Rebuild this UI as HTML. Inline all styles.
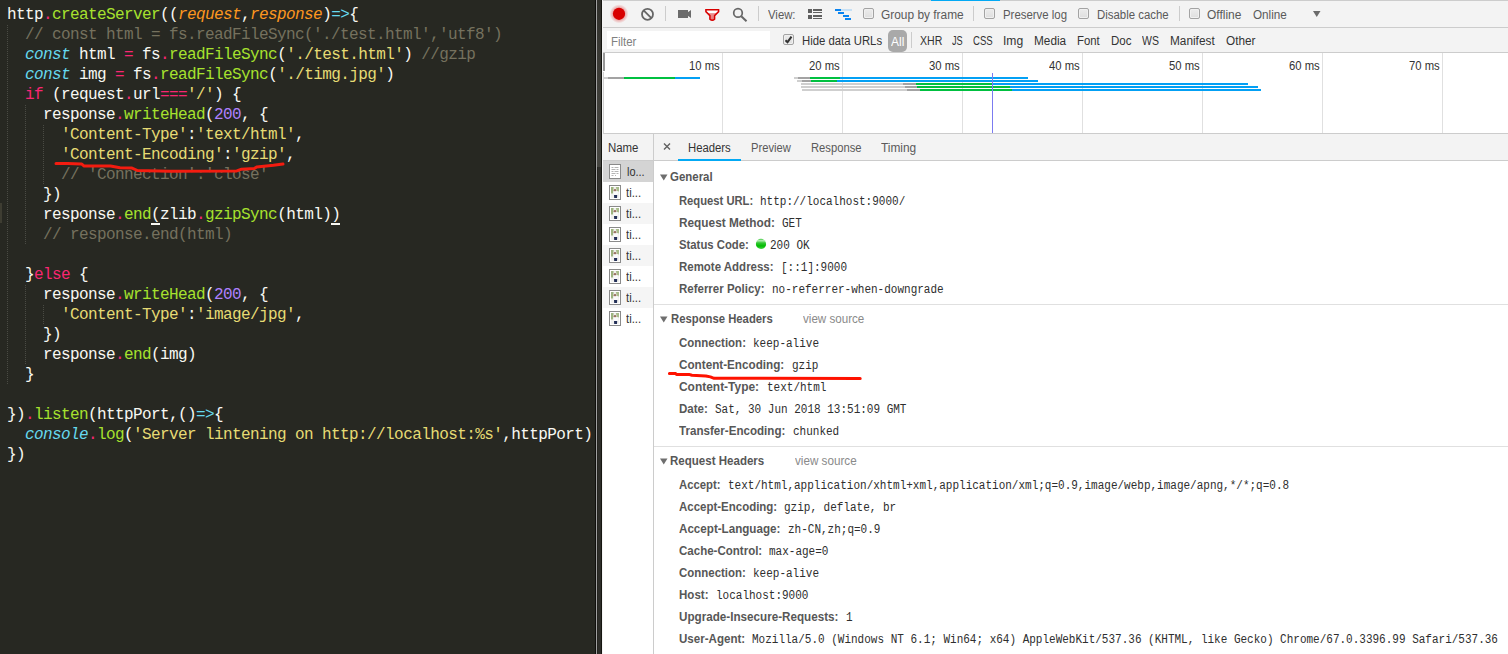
<!DOCTYPE html><html><head><meta charset="utf-8"><style>
html,body{margin:0;padding:0;}body{width:1508px;height:654px;position:relative;overflow:hidden;background:#272822;}
.t{position:absolute;white-space:pre;}
.code{position:absolute;left:7px;white-space:pre;font-family:"Liberation Mono",monospace;font-size:16px;line-height:20px;letter-spacing:-0.6px;color:#f8f8f2;}
.w{color:#f8f8f2}.p{color:#f92672}.g{color:#a6e22e}.oi{color:#fd971f;font-style:italic}.ci{color:#66d9ef;font-style:italic}.c{color:#66d9ef}.y{color:#e6db74}.pu{color:#ae81ff}.cm{color:#75715e}
</style></head><body>
<div style="position:absolute;left:7px;top:24px;width:1px;height:360px;background:repeating-linear-gradient(to bottom,transparent 0 1px,#4a4b44 1px 2px);"></div>
<div style="position:absolute;left:25px;top:104px;width:1px;height:140px;background:repeating-linear-gradient(to bottom,transparent 0 1px,#4a4b44 1px 2px);"></div>
<div style="position:absolute;left:25px;top:284px;width:1px;height:80px;background:repeating-linear-gradient(to bottom,transparent 0 1px,#4a4b44 1px 2px);"></div>
<div style="position:absolute;left:43px;top:124px;width:1px;height:60px;background:repeating-linear-gradient(to bottom,transparent 0 1px,#4a4b44 1px 2px);"></div>
<div style="position:absolute;left:43px;top:304px;width:1px;height:20px;background:repeating-linear-gradient(to bottom,transparent 0 1px,#4a4b44 1px 2px);"></div>
<div style="position:absolute;left:0px;top:203px;width:2px;height:20px;background:#3e3d32;"></div>
<div class="code" style="top:5px"><span class="w">http</span><span class="p">.</span><span class="g">createServer</span><span class="w">((</span><span class="oi">request</span><span class="w">,</span><span class="oi">response</span><span class="w">)</span><span class="c">=&gt;</span><span class="w">{</span></div>
<div class="code" style="top:25px"><span class="w">  </span><span class="cm">// const html = fs.readFileSync('./test.html','utf8')</span></div>
<div class="code" style="top:45px"><span class="w">  </span><span class="ci">const</span><span class="w"> html </span><span class="p">=</span><span class="w"> fs</span><span class="p">.</span><span class="g">readFileSync</span><span class="w">(</span><span class="y">'./test.html'</span><span class="w">) </span><span class="cm">//gzip</span></div>
<div class="code" style="top:65px"><span class="w">  </span><span class="ci">const</span><span class="w"> img </span><span class="p">=</span><span class="w"> fs</span><span class="p">.</span><span class="g">readFileSync</span><span class="w">(</span><span class="y">'./timg.jpg'</span><span class="w">)</span></div>
<div class="code" style="top:85px"><span class="w">  </span><span class="p">if</span><span class="w"> (request</span><span class="p">.</span><span class="w">url</span><span class="p">===</span><span class="y">'/'</span><span class="w">) {</span></div>
<div class="code" style="top:105px"><span class="w">    </span><span class="w">response</span><span class="p">.</span><span class="g">writeHead</span><span class="w">(</span><span class="pu">200</span><span class="w">, {</span></div>
<div class="code" style="top:125px"><span class="w">      </span><span class="y">'Content-Type'</span><span class="w">:</span><span class="y">'text/html'</span><span class="w">,</span></div>
<div class="code" style="top:145px"><span class="w">      </span><span class="y">'Content-Encoding'</span><span class="w">:</span><span class="y">'gzip'</span><span class="w">,</span></div>
<div class="code" style="top:165px"><span class="w">      </span><span class="cm">// 'Connection':'close'</span></div>
<div class="code" style="top:185px"><span class="w">    </span><span class="w">})</span></div>
<div class="code" style="top:205px"><span class="w">    </span><span class="w">response</span><span class="p">.</span><span class="g">end</span><span class="w">(</span><span class="w">zlib</span><span class="p">.</span><span class="g">gzipSync</span><span class="w">(html))</span></div>
<div class="code" style="top:225px"><span class="w">    </span><span class="cm">// response.end(html)</span></div>
<div class="code" style="top:245px"></div>
<div class="code" style="top:265px"><span class="w">  </span><span class="w">}</span><span class="p">else</span><span class="w"> {</span></div>
<div class="code" style="top:285px"><span class="w">    </span><span class="w">response</span><span class="p">.</span><span class="g">writeHead</span><span class="w">(</span><span class="pu">200</span><span class="w">, {</span></div>
<div class="code" style="top:305px"><span class="w">      </span><span class="y">'Content-Type'</span><span class="w">:</span><span class="y">'image/jpg'</span><span class="w">,</span></div>
<div class="code" style="top:325px"><span class="w">    </span><span class="w">})</span></div>
<div class="code" style="top:345px"><span class="w">    </span><span class="w">response</span><span class="p">.</span><span class="g">end</span><span class="w">(img)</span></div>
<div class="code" style="top:365px"><span class="w">  </span><span class="w">}</span></div>
<div class="code" style="top:385px"></div>
<div class="code" style="top:405px"><span class="w">})</span><span class="p">.</span><span class="g">listen</span><span class="w">(httpPort,()</span><span class="c">=&gt;</span><span class="w">{</span></div>
<div class="code" style="top:425px"><span class="w">  </span><span class="ci">console</span><span class="p">.</span><span class="g">log</span><span class="w">(</span><span class="y">'Server lintening on http://localhost:%s'</span><span class="w">,httpPort)</span></div>
<div class="code" style="top:445px"><span class="w">})</span></div>
<div style="position:absolute;left:151px;top:223px;width:9px;height:2px;background:#f8f8f2;"></div>
<div style="position:absolute;left:331px;top:223px;width:9px;height:2px;background:#f8f8f2;"></div>
<svg style="position:absolute;left:0;top:0" width="600" height="654"><path d="M56 163.6 L67.5 163.6 L81.8 164.1 L84.2 166.1 L110.5 166.1 L120 167.7 L132 168.1 L137.5 170.5 L170 171.3 L236.8 170.9 L241.6 169.2 L254.3 168.5 L256.7 166.9 L273.4 165.3 L283 164.1" stroke="#f41c10" stroke-width="3" fill="none" stroke-linecap="round" stroke-linejoin="round"/></svg>
<div style="position:absolute;left:595px;top:0px;width:1px;height:654px;background:#0f0f0c;"></div>
<div style="position:absolute;left:596px;top:0px;width:1px;height:654px;background:#a0a0a0;"></div>
<div style="position:absolute;left:597px;top:0px;width:1px;height:654px;background:#252520;"></div>
<div style="position:absolute;left:598px;top:0px;width:3px;height:654px;background:#2e2e2a;"></div>
<div style="position:absolute;left:597px;top:0px;width:4px;height:167px;background:linear-gradient(#30302b,#3a3a35 30%,#464641);"></div>
<div style="position:absolute;left:601px;top:0px;width:1px;height:654px;background:#151510;"></div>
<div style="position:absolute;left:602px;top:0px;width:1px;height:654px;background:#f4f4f4;"></div>
<div style="position:absolute;left:603px;top:0px;width:905px;height:654px;background:#ffffff;"></div>
<div style="position:absolute;left:603px;top:0px;width:905px;height:1px;background:#cccccc;"></div>
<div style="position:absolute;left:931px;top:0px;width:69px;height:1px;background:#03a9f4;"></div>
<div style="position:absolute;left:603px;top:1px;width:905px;height:26px;background:#f3f3f3;"></div>
<div style="position:absolute;left:603px;top:27px;width:905px;height:1px;background:#cccccc;"></div>
<div style="position:absolute;left:603px;top:28px;width:905px;height:24px;background:#f3f3f3;"></div>
<div style="position:absolute;left:603px;top:52px;width:905px;height:1px;background:#cccccc;"></div>
<div style="position:absolute;left:603px;top:72px;width:1px;height:61px;background:#d0d0d0;"></div>
<div style="position:absolute;left:603px;top:53px;width:2px;height:18px;background:#999999;"></div>
<div style="position:absolute;left:722px;top:53px;width:1px;height:80px;background:#e0e0e0;"></div>
<div style="position:absolute;left:842px;top:53px;width:1px;height:80px;background:#e0e0e0;"></div>
<div style="position:absolute;left:962px;top:53px;width:1px;height:80px;background:#e0e0e0;"></div>
<div style="position:absolute;left:1082px;top:53px;width:1px;height:80px;background:#e0e0e0;"></div>
<div style="position:absolute;left:1202px;top:53px;width:1px;height:80px;background:#e0e0e0;"></div>
<div style="position:absolute;left:1322px;top:53px;width:1px;height:80px;background:#e0e0e0;"></div>
<div style="position:absolute;left:1442px;top:53px;width:1px;height:80px;background:#e0e0e0;"></div>
<div style="position:absolute;left:603px;top:133px;width:905px;height:1px;background:#cccccc;"></div>
<svg style="position:absolute;left:603px;top:0" width="260" height="28"><defs><radialGradient id="rg"><stop offset="0.6" stop-color="#d80000" stop-opacity="0.35"/><stop offset="1" stop-color="#d80000" stop-opacity="0"/></radialGradient></defs><circle cx="16" cy="13.8" r="9.5" fill="url(#rg)"/><circle cx="16" cy="13.8" r="6.1" fill="#d80000"/><circle cx="44.5" cy="14.3" r="5.5" stroke="#666" stroke-width="1.8" fill="none"/><path d="M40.6 10.4 L48.4 18.2" stroke="#666" stroke-width="1.8"/><rect x="75" y="10" width="10" height="8" fill="#6b6b6b"/><path d="M84.5 12.5 L88 10 L88 18 L84.5 15.5 Z" fill="#6b6b6b"/><defs><linearGradient id="fg" x1="0" y1="0" x2="0" y2="1"><stop offset="0.32" stop-color="#ffffff"/><stop offset="0.36" stop-color="#eb9090"/><stop offset="1" stop-color="#e57a7a"/></linearGradient></defs><path d="M102.9 9.8 L115.6 9.8 L115.6 11.6 L111.6 15.6 L111.6 19.2 Q109.25 21.2 106.9 19.2 L106.9 15.6 L102.9 11.6 Z" fill="url(#fg)" stroke="#d80000" stroke-width="1.5" stroke-linejoin="miter"/><circle cx="135" cy="12.9" r="4.3" stroke="#666" stroke-width="1.7" fill="none"/><path d="M138.3 16.3 L143.5 21.3" stroke="#666" stroke-width="2"/></svg>
<div style="position:absolute;left:665px;top:6px;width:1px;height:15px;background:#cccccc;"></div>
<div style="position:absolute;left:758px;top:6px;width:1px;height:15px;background:#cccccc;"></div>
<div class="t" style="left:768.00px;top:8.59px;font-size:12.3px;line-height:12.3px;font-family:'Liberation Sans', sans-serif;font-weight:normal;color:#5a5a5a;transform:scaleX(0.9220);transform-origin:0 0;">View:</div>
<div style="position:absolute;left:808px;top:9px;width:4px;height:4px;background:#5f5f5f;"></div>
<div style="position:absolute;left:813px;top:9px;width:9px;height:2px;background:#5f5f5f;"></div>
<div style="position:absolute;left:813px;top:12px;width:9px;height:1px;background:#5f5f5f;"></div>
<div style="position:absolute;left:808px;top:15px;width:4px;height:4px;background:#5f5f5f;"></div>
<div style="position:absolute;left:813px;top:15px;width:9px;height:2px;background:#5f5f5f;"></div>
<div style="position:absolute;left:813px;top:18px;width:9px;height:1px;background:#5f5f5f;"></div>
<div style="position:absolute;left:835px;top:9px;width:6px;height:2px;background:#0a84f0;"></div>
<div style="position:absolute;left:841px;top:9px;width:11px;height:2px;background:#c6e0f5;"></div>
<div style="position:absolute;left:838px;top:12px;width:6px;height:2px;background:#0a84f0;"></div>
<div style="position:absolute;left:843px;top:15px;width:6px;height:2px;background:#0a84f0;"></div>
<div style="position:absolute;left:845px;top:18px;width:6px;height:2px;background:#0a84f0;"></div>
<div style="position:absolute;left:863px;top:8px;width:9px;height:9px;border:1px solid #a3a3a3;border-radius:2px;background:linear-gradient(#ececec,#dedede);box-shadow:inset 0 0 0 1px #f0f0f0;"></div>
<div class="t" style="left:881.30px;top:8.59px;font-size:12.3px;line-height:12.3px;font-family:'Liberation Sans', sans-serif;font-weight:normal;color:#5a5a5a;transform:scaleX(0.9681);transform-origin:0 0;">Group by frame</div>
<div style="position:absolute;left:973px;top:6px;width:1px;height:15px;background:#cccccc;"></div>
<div style="position:absolute;left:984px;top:8px;width:9px;height:9px;border:1px solid #a3a3a3;border-radius:2px;background:linear-gradient(#ececec,#dedede);box-shadow:inset 0 0 0 1px #f0f0f0;"></div>
<div class="t" style="left:1002.90px;top:8.59px;font-size:12.3px;line-height:12.3px;font-family:'Liberation Sans', sans-serif;font-weight:normal;color:#5a5a5a;transform:scaleX(0.9267);transform-origin:0 0;">Preserve log</div>
<div style="position:absolute;left:1078px;top:8px;width:9px;height:9px;border:1px solid #a3a3a3;border-radius:2px;background:linear-gradient(#ececec,#dedede);box-shadow:inset 0 0 0 1px #f0f0f0;"></div>
<div class="t" style="left:1096.70px;top:8.59px;font-size:12.3px;line-height:12.3px;font-family:'Liberation Sans', sans-serif;font-weight:normal;color:#5a5a5a;transform:scaleX(0.9282);transform-origin:0 0;">Disable cache</div>
<div style="position:absolute;left:1179px;top:6px;width:1px;height:15px;background:#cccccc;"></div>
<div style="position:absolute;left:1189px;top:8px;width:9px;height:9px;border:1px solid #a3a3a3;border-radius:2px;background:linear-gradient(#ececec,#dedede);box-shadow:inset 0 0 0 1px #f0f0f0;"></div>
<div class="t" style="left:1207.20px;top:8.59px;font-size:12.3px;line-height:12.3px;font-family:'Liberation Sans', sans-serif;font-weight:normal;color:#5a5a5a;transform:scaleX(0.9745);transform-origin:0 0;">Offline</div>
<div class="t" style="left:1252.50px;top:8.59px;font-size:12.3px;line-height:12.3px;font-family:'Liberation Sans', sans-serif;font-weight:normal;color:#5a5a5a;transform:scaleX(0.9509);transform-origin:0 0;">Online</div>
<svg style="position:absolute;left:1312px;top:10px" width="10" height="8"><path d="M1 1 L8.5 1 L4.75 7 Z" fill="#6b6b6b"/></svg>
<div style="position:absolute;left:607px;top:31px;width:163px;height:18px;background:#ffffff;"></div>
<div class="t" style="left:610.80px;top:35.59px;font-size:12.3px;line-height:12.3px;font-family:'Liberation Sans', sans-serif;font-weight:normal;color:#808080;transform:scaleX(0.9302);transform-origin:0 0;">Filter</div>
<div style="position:absolute;left:783px;top:34px;width:9px;height:9px;border:1px solid #a3a3a3;border-radius:2px;background:linear-gradient(#ececec,#dedede);box-shadow:inset 0 0 0 1px #f0f0f0;"></div>
<svg style="position:absolute;left:783px;top:34px" width="11" height="11"><path d="M2.5 6.2 L4.5 8.2 L8.5 2.6" stroke="#333" stroke-width="2" fill="none"/></svg>
<div class="t" style="left:801.70px;top:34.59px;font-size:12.3px;line-height:12.3px;font-family:'Liberation Sans', sans-serif;font-weight:normal;color:#333333;transform:scaleX(0.9224);transform-origin:0 0;">Hide data URLs</div>
<div style="position:absolute;left:888px;top:30px;width:19px;height:22px;border-radius:5px;background:#a9a9a9;"></div>
<div class="t" style="left:890.70px;top:35.59px;font-size:12.3px;line-height:12.3px;font-family:'Liberation Sans', sans-serif;font-weight:normal;color:#ffffff;transform:scaleX(0.9741);transform-origin:0 0;">All</div>
<div style="position:absolute;left:911px;top:32px;width:1px;height:16px;background:#cccccc;"></div>
<div class="t" style="left:919.50px;top:34.59px;font-size:12.3px;line-height:12.3px;font-family:'Liberation Sans', sans-serif;font-weight:normal;color:#333333;transform:scaleX(0.8592);transform-origin:0 0;">XHR</div>
<div class="t" style="left:951.80px;top:34.59px;font-size:12.3px;line-height:12.3px;font-family:'Liberation Sans', sans-serif;font-weight:normal;color:#333333;transform:scaleX(0.7467);transform-origin:0 0;">JS</div>
<div class="t" style="left:973.00px;top:34.59px;font-size:12.3px;line-height:12.3px;font-family:'Liberation Sans', sans-serif;font-weight:normal;color:#333333;transform:scaleX(0.7794);transform-origin:0 0;">CSS</div>
<div class="t" style="left:1002.90px;top:34.59px;font-size:12.3px;line-height:12.3px;font-family:'Liberation Sans', sans-serif;font-weight:normal;color:#333333;transform:scaleX(0.9864);transform-origin:0 0;">Img</div>
<div class="t" style="left:1034.40px;top:34.59px;font-size:12.3px;line-height:12.3px;font-family:'Liberation Sans', sans-serif;font-weight:normal;color:#333333;transform:scaleX(0.9589);transform-origin:0 0;">Media</div>
<div class="t" style="left:1077.40px;top:34.59px;font-size:12.3px;line-height:12.3px;font-family:'Liberation Sans', sans-serif;font-weight:normal;color:#333333;transform:scaleX(0.9228);transform-origin:0 0;">Font</div>
<div class="t" style="left:1110.90px;top:34.59px;font-size:12.3px;line-height:12.3px;font-family:'Liberation Sans', sans-serif;font-weight:normal;color:#333333;transform:scaleX(0.9363);transform-origin:0 0;">Doc</div>
<div class="t" style="left:1141.80px;top:34.59px;font-size:12.3px;line-height:12.3px;font-family:'Liberation Sans', sans-serif;font-weight:normal;color:#333333;transform:scaleX(0.8534);transform-origin:0 0;">WS</div>
<div class="t" style="left:1170.00px;top:34.59px;font-size:12.3px;line-height:12.3px;font-family:'Liberation Sans', sans-serif;font-weight:normal;color:#333333;transform:scaleX(0.9614);transform-origin:0 0;">Manifest</div>
<div class="t" style="left:1225.50px;top:34.59px;font-size:12.3px;line-height:12.3px;font-family:'Liberation Sans', sans-serif;font-weight:normal;color:#333333;transform:scaleX(0.9593);transform-origin:0 0;">Other</div>
<div class="t" style="left:688.70px;top:59.59px;font-size:12.3px;line-height:12.3px;font-family:'Liberation Sans', sans-serif;font-weight:normal;color:#333333;transform:scaleX(0.9189);transform-origin:0 0;">10 ms</div>
<div class="t" style="left:808.70px;top:59.59px;font-size:12.3px;line-height:12.3px;font-family:'Liberation Sans', sans-serif;font-weight:normal;color:#333333;transform:scaleX(0.9189);transform-origin:0 0;">20 ms</div>
<div class="t" style="left:928.70px;top:59.59px;font-size:12.3px;line-height:12.3px;font-family:'Liberation Sans', sans-serif;font-weight:normal;color:#333333;transform:scaleX(0.9189);transform-origin:0 0;">30 ms</div>
<div class="t" style="left:1048.70px;top:59.59px;font-size:12.3px;line-height:12.3px;font-family:'Liberation Sans', sans-serif;font-weight:normal;color:#333333;transform:scaleX(0.9189);transform-origin:0 0;">40 ms</div>
<div class="t" style="left:1168.70px;top:59.59px;font-size:12.3px;line-height:12.3px;font-family:'Liberation Sans', sans-serif;font-weight:normal;color:#333333;transform:scaleX(0.9189);transform-origin:0 0;">50 ms</div>
<div class="t" style="left:1288.70px;top:59.59px;font-size:12.3px;line-height:12.3px;font-family:'Liberation Sans', sans-serif;font-weight:normal;color:#333333;transform:scaleX(0.9189);transform-origin:0 0;">60 ms</div>
<div class="t" style="left:1408.70px;top:59.59px;font-size:12.3px;line-height:12.3px;font-family:'Liberation Sans', sans-serif;font-weight:normal;color:#333333;transform:scaleX(0.9189);transform-origin:0 0;">70 ms</div>
<div style="position:absolute;left:603px;top:77px;width:5px;height:2px;background:#cfcfcf;"></div>
<div style="position:absolute;left:608px;top:77px;width:16px;height:2px;background:#a3a3a3;"></div>
<div style="position:absolute;left:624px;top:77px;width:51px;height:2px;background:#00c040;"></div>
<div style="position:absolute;left:675px;top:77px;width:25px;height:2px;background:#03a0f4;"></div>
<div style="position:absolute;left:794px;top:77px;width:4px;height:2px;background:#cfcfcf;"></div>
<div style="position:absolute;left:798px;top:77px;width:12px;height:2px;background:#a3a3a3;"></div>
<div style="position:absolute;left:810px;top:77px;width:30px;height:2px;background:#00c040;"></div>
<div style="position:absolute;left:840px;top:77px;width:188px;height:2px;background:#03a0f4;"></div>
<div style="position:absolute;left:797px;top:80px;width:5px;height:2px;background:#cfcfcf;"></div>
<div style="position:absolute;left:802px;top:80px;width:9px;height:2px;background:#a3a3a3;"></div>
<div style="position:absolute;left:811px;top:80px;width:26px;height:2px;background:#00c040;"></div>
<div style="position:absolute;left:837px;top:80px;width:201px;height:2px;background:#03a0f4;"></div>
<div style="position:absolute;left:801px;top:83px;width:102px;height:2px;background:#cfcfcf;"></div>
<div style="position:absolute;left:903px;top:83px;width:13px;height:2px;background:#a3a3a3;"></div>
<div style="position:absolute;left:916px;top:83px;width:76px;height:2px;background:#00c040;"></div>
<div style="position:absolute;left:992px;top:83px;width:256px;height:2px;background:#03a0f4;"></div>
<div style="position:absolute;left:801px;top:86px;width:104px;height:2px;background:#cfcfcf;"></div>
<div style="position:absolute;left:905px;top:86px;width:12px;height:2px;background:#a3a3a3;"></div>
<div style="position:absolute;left:917px;top:86px;width:93px;height:2px;background:#00c040;"></div>
<div style="position:absolute;left:1010px;top:86px;width:248px;height:2px;background:#03a0f4;"></div>
<div style="position:absolute;left:802px;top:89px;width:105px;height:2px;background:#cfcfcf;"></div>
<div style="position:absolute;left:907px;top:89px;width:13px;height:2px;background:#a3a3a3;"></div>
<div style="position:absolute;left:920px;top:89px;width:92px;height:2px;background:#00c040;"></div>
<div style="position:absolute;left:1012px;top:89px;width:249px;height:2px;background:#03a0f4;"></div>
<div style="position:absolute;left:992px;top:73px;width:1px;height:60px;background:#7b7bf0;"></div>
<div style="position:absolute;left:603px;top:134px;width:905px;height:26px;background:#f3f3f3;"></div>
<div style="position:absolute;left:653px;top:160px;width:855px;height:1px;background:#cccccc;"></div>
<div style="position:absolute;left:603px;top:160px;width:50px;height:1px;background:#cccccc;"></div>
<div style="position:absolute;left:653px;top:134px;width:1px;height:520px;background:#cccccc;"></div>
<div class="t" style="left:607.80px;top:141.59px;font-size:12.3px;line-height:12.3px;font-family:'Liberation Sans', sans-serif;font-weight:normal;color:#333333;transform:scaleX(0.9287);transform-origin:0 0;">Name</div>
<svg style="position:absolute;left:662px;top:143px" width="10" height="9"><path d="M2 0.6 L8 6.6 M8 0.6 L2 6.6" stroke="#606060" stroke-width="1.4"/></svg>
<div class="t" style="left:688.00px;top:141.59px;font-size:12.3px;line-height:12.3px;font-family:'Liberation Sans', sans-serif;font-weight:normal;color:#333333;transform:scaleX(0.9205);transform-origin:0 0;">Headers</div>
<div style="position:absolute;left:678px;top:159px;width:63px;height:2px;background:#03a9f4;"></div>
<div class="t" style="left:751.20px;top:141.59px;font-size:12.3px;line-height:12.3px;font-family:'Liberation Sans', sans-serif;font-weight:normal;color:#5a5a5a;transform:scaleX(0.9112);transform-origin:0 0;">Preview</div>
<div class="t" style="left:810.60px;top:141.59px;font-size:12.3px;line-height:12.3px;font-family:'Liberation Sans', sans-serif;font-weight:normal;color:#5a5a5a;transform:scaleX(0.9114);transform-origin:0 0;">Response</div>
<div class="t" style="left:881.20px;top:141.59px;font-size:12.3px;line-height:12.3px;font-family:'Liberation Sans', sans-serif;font-weight:normal;color:#5a5a5a;transform:scaleX(0.9652);transform-origin:0 0;">Timing</div>
<div style="position:absolute;left:603px;top:161px;width:50px;height:21px;background:#d4d4d4;"></div>
<svg style="position:absolute;left:609px;top:164px" width="12" height="15"><rect x="0.5" y="0.5" width="11" height="14" fill="#fff" stroke="#8a8a8a"/><path d="M2.5 3.5h2 M5.5 3.5h4 M2.5 5.5h4 M7.5 5.5h2 M2.5 7.5h2 M5.5 7.5h4 M2.5 9.5h4 M7.5 9.5h2 M2.5 11.5h2 M6 11.5h1" stroke="#b4b4b4" stroke-width="1"/></svg>
<div class="t" style="left:626.70px;top:165.59px;font-size:12.3px;line-height:12.3px;font-family:'Liberation Sans', sans-serif;font-weight:normal;color:#333333;transform:scaleX(0.8888);transform-origin:0 0;">lo...</div>
<svg style="position:absolute;left:609px;top:185px" width="12" height="15"><rect x="0.5" y="0.5" width="11" height="14" fill="#fff" stroke="#8a8a8a"/><rect x="2" y="2" width="8" height="11" fill="#f0f0ee"/><path d="M2 2 H4.6 L4 8.5 L2 8.5 Z" fill="#9db37f"/><path d="M6.8 2 H10 V6.5 L8 6 Z" fill="#a8bc8b"/><circle cx="6" cy="5.2" r="1.3" fill="#9a7262"/><rect x="4.6" y="6.4" width="4.2" height="3.8" fill="#fafafa"/><path d="M5 10 H8.2 L8 13 H5.2 Z" fill="#243058"/></svg>
<div class="t" style="left:626.00px;top:186.59px;font-size:12.3px;line-height:12.3px;font-family:'Liberation Sans', sans-serif;font-weight:normal;color:#333333;transform:scaleX(0.9257);transform-origin:0 0;">ti...</div>
<div style="position:absolute;left:603px;top:203px;width:50px;height:21px;background:#f5f5f5;"></div>
<svg style="position:absolute;left:609px;top:206px" width="12" height="15"><rect x="0.5" y="0.5" width="11" height="14" fill="#fff" stroke="#8a8a8a"/><rect x="2" y="2" width="8" height="11" fill="#f0f0ee"/><path d="M2 2 H4.6 L4 8.5 L2 8.5 Z" fill="#9db37f"/><path d="M6.8 2 H10 V6.5 L8 6 Z" fill="#a8bc8b"/><circle cx="6" cy="5.2" r="1.3" fill="#9a7262"/><rect x="4.6" y="6.4" width="4.2" height="3.8" fill="#fafafa"/><path d="M5 10 H8.2 L8 13 H5.2 Z" fill="#243058"/></svg>
<div class="t" style="left:626.00px;top:207.59px;font-size:12.3px;line-height:12.3px;font-family:'Liberation Sans', sans-serif;font-weight:normal;color:#333333;transform:scaleX(0.9257);transform-origin:0 0;">ti...</div>
<svg style="position:absolute;left:609px;top:227px" width="12" height="15"><rect x="0.5" y="0.5" width="11" height="14" fill="#fff" stroke="#8a8a8a"/><rect x="2" y="2" width="8" height="11" fill="#f0f0ee"/><path d="M2 2 H4.6 L4 8.5 L2 8.5 Z" fill="#9db37f"/><path d="M6.8 2 H10 V6.5 L8 6 Z" fill="#a8bc8b"/><circle cx="6" cy="5.2" r="1.3" fill="#9a7262"/><rect x="4.6" y="6.4" width="4.2" height="3.8" fill="#fafafa"/><path d="M5 10 H8.2 L8 13 H5.2 Z" fill="#243058"/></svg>
<div class="t" style="left:626.00px;top:228.59px;font-size:12.3px;line-height:12.3px;font-family:'Liberation Sans', sans-serif;font-weight:normal;color:#333333;transform:scaleX(0.9257);transform-origin:0 0;">ti...</div>
<div style="position:absolute;left:603px;top:245px;width:50px;height:21px;background:#f5f5f5;"></div>
<svg style="position:absolute;left:609px;top:248px" width="12" height="15"><rect x="0.5" y="0.5" width="11" height="14" fill="#fff" stroke="#8a8a8a"/><rect x="2" y="2" width="8" height="11" fill="#f0f0ee"/><path d="M2 2 H4.6 L4 8.5 L2 8.5 Z" fill="#9db37f"/><path d="M6.8 2 H10 V6.5 L8 6 Z" fill="#a8bc8b"/><circle cx="6" cy="5.2" r="1.3" fill="#9a7262"/><rect x="4.6" y="6.4" width="4.2" height="3.8" fill="#fafafa"/><path d="M5 10 H8.2 L8 13 H5.2 Z" fill="#243058"/></svg>
<div class="t" style="left:626.00px;top:249.59px;font-size:12.3px;line-height:12.3px;font-family:'Liberation Sans', sans-serif;font-weight:normal;color:#333333;transform:scaleX(0.9257);transform-origin:0 0;">ti...</div>
<svg style="position:absolute;left:609px;top:269px" width="12" height="15"><rect x="0.5" y="0.5" width="11" height="14" fill="#fff" stroke="#8a8a8a"/><rect x="2" y="2" width="8" height="11" fill="#f0f0ee"/><path d="M2 2 H4.6 L4 8.5 L2 8.5 Z" fill="#9db37f"/><path d="M6.8 2 H10 V6.5 L8 6 Z" fill="#a8bc8b"/><circle cx="6" cy="5.2" r="1.3" fill="#9a7262"/><rect x="4.6" y="6.4" width="4.2" height="3.8" fill="#fafafa"/><path d="M5 10 H8.2 L8 13 H5.2 Z" fill="#243058"/></svg>
<div class="t" style="left:626.00px;top:270.59px;font-size:12.3px;line-height:12.3px;font-family:'Liberation Sans', sans-serif;font-weight:normal;color:#333333;transform:scaleX(0.9257);transform-origin:0 0;">ti...</div>
<div style="position:absolute;left:603px;top:287px;width:50px;height:21px;background:#f5f5f5;"></div>
<svg style="position:absolute;left:609px;top:290px" width="12" height="15"><rect x="0.5" y="0.5" width="11" height="14" fill="#fff" stroke="#8a8a8a"/><rect x="2" y="2" width="8" height="11" fill="#f0f0ee"/><path d="M2 2 H4.6 L4 8.5 L2 8.5 Z" fill="#9db37f"/><path d="M6.8 2 H10 V6.5 L8 6 Z" fill="#a8bc8b"/><circle cx="6" cy="5.2" r="1.3" fill="#9a7262"/><rect x="4.6" y="6.4" width="4.2" height="3.8" fill="#fafafa"/><path d="M5 10 H8.2 L8 13 H5.2 Z" fill="#243058"/></svg>
<div class="t" style="left:626.00px;top:291.59px;font-size:12.3px;line-height:12.3px;font-family:'Liberation Sans', sans-serif;font-weight:normal;color:#333333;transform:scaleX(0.9257);transform-origin:0 0;">ti...</div>
<svg style="position:absolute;left:609px;top:311px" width="12" height="15"><rect x="0.5" y="0.5" width="11" height="14" fill="#fff" stroke="#8a8a8a"/><rect x="2" y="2" width="8" height="11" fill="#f0f0ee"/><path d="M2 2 H4.6 L4 8.5 L2 8.5 Z" fill="#9db37f"/><path d="M6.8 2 H10 V6.5 L8 6 Z" fill="#a8bc8b"/><circle cx="6" cy="5.2" r="1.3" fill="#9a7262"/><rect x="4.6" y="6.4" width="4.2" height="3.8" fill="#fafafa"/><path d="M5 10 H8.2 L8 13 H5.2 Z" fill="#243058"/></svg>
<div class="t" style="left:626.00px;top:312.59px;font-size:12.3px;line-height:12.3px;font-family:'Liberation Sans', sans-serif;font-weight:normal;color:#333333;transform:scaleX(0.9257);transform-origin:0 0;">ti...</div>
<svg style="position:absolute;left:660px;top:174px" width="8" height="7"><path d="M0 0.5 L7.5 0.5 L3.75 6.5 Z" fill="#6e6e6e"/></svg>
<div class="t" style="left:670.40px;top:170.59px;font-size:12.3px;line-height:12.3px;font-family:'Liberation Sans', sans-serif;font-weight:bold;color:#575757;transform:scaleX(0.9320);transform-origin:0 0;">General</div>
<div class="t" style="left:679.30px;top:194.59px;font-size:12.3px;line-height:12.3px;font-family:'Liberation Sans', sans-serif;font-weight:bold;color:#575757;transform:scaleX(0.9126);transform-origin:0 0;">Request URL:</div>
<div class="t" style="left:760.40px;top:195.80px;font-size:12px;line-height:12px;font-family:'Liberation Mono', monospace;font-weight:normal;color:#2e2e2e;transform:scaleX(0.9167);transform-origin:0 0;">http://localhost:9000/</div>
<div class="t" style="left:679.30px;top:216.59px;font-size:12.3px;line-height:12.3px;font-family:'Liberation Sans', sans-serif;font-weight:bold;color:#575757;transform:scaleX(0.9614);transform-origin:0 0;">Request Method:</div>
<div class="t" style="left:781.90px;top:217.80px;font-size:12px;line-height:12px;font-family:'Liberation Mono', monospace;font-weight:normal;color:#2e2e2e;transform:scaleX(0.9167);transform-origin:0 0;">GET</div>
<div class="t" style="left:679.30px;top:238.59px;font-size:12.3px;line-height:12.3px;font-family:'Liberation Sans', sans-serif;font-weight:bold;color:#575757;transform:scaleX(0.9205);transform-origin:0 0;">Status Code:</div>
<div class="t" style="left:770.40px;top:239.80px;font-size:12px;line-height:12px;font-family:'Liberation Mono', monospace;font-weight:normal;color:#2e2e2e;transform:scaleX(0.9167);transform-origin:0 0;">200 OK</div>
<div class="t" style="left:679.30px;top:260.59px;font-size:12.3px;line-height:12.3px;font-family:'Liberation Sans', sans-serif;font-weight:bold;color:#575757;transform:scaleX(0.9328);transform-origin:0 0;">Remote Address:</div>
<div class="t" style="left:781.30px;top:261.80px;font-size:12px;line-height:12px;font-family:'Liberation Mono', monospace;font-weight:normal;color:#2e2e2e;transform:scaleX(0.9167);transform-origin:0 0;">[::1]:9000</div>
<div class="t" style="left:679.30px;top:282.59px;font-size:12.3px;line-height:12.3px;font-family:'Liberation Sans', sans-serif;font-weight:bold;color:#575757;transform:scaleX(0.9341);transform-origin:0 0;">Referrer Policy:</div>
<div class="t" style="left:772.40px;top:283.80px;font-size:12px;line-height:12px;font-family:'Liberation Mono', monospace;font-weight:normal;color:#2e2e2e;transform:scaleX(0.9167);transform-origin:0 0;">no-referrer-when-downgrade</div>
<svg style="position:absolute;left:755px;top:238px" width="12" height="12"><defs><linearGradient id="gd" x1="0" y1="0" x2="0" y2="1"><stop offset="0" stop-color="#3cc83c"/><stop offset="0.18" stop-color="#b4eeb4"/><stop offset="0.4" stop-color="#34c834"/><stop offset="0.7" stop-color="#00bb00"/><stop offset="1" stop-color="#44d444"/></linearGradient></defs><circle cx="6" cy="5.9" r="5.1" fill="url(#gd)"/></svg>
<div style="position:absolute;left:654px;top:304px;width:854px;height:1px;background:#e0e0e0;"></div>
<svg style="position:absolute;left:660px;top:316px" width="8" height="7"><path d="M0 0.5 L7.5 0.5 L3.75 6.5 Z" fill="#6e6e6e"/></svg>
<div class="t" style="left:670.60px;top:312.59px;font-size:12.3px;line-height:12.3px;font-family:'Liberation Sans', sans-serif;font-weight:bold;color:#575757;transform:scaleX(0.9191);transform-origin:0 0;">Response Headers</div>
<div class="t" style="left:802.90px;top:312.59px;font-size:12.3px;line-height:12.3px;font-family:'Liberation Sans', sans-serif;font-weight:normal;color:#8a8a8a;transform:scaleX(0.9439);transform-origin:0 0;">view source</div>
<div class="t" style="left:679.30px;top:336.59px;font-size:12.3px;line-height:12.3px;font-family:'Liberation Sans', sans-serif;font-weight:bold;color:#575757;transform:scaleX(0.9335);transform-origin:0 0;">Connection:</div>
<div class="t" style="left:753.20px;top:337.80px;font-size:12px;line-height:12px;font-family:'Liberation Mono', monospace;font-weight:normal;color:#2e2e2e;transform:scaleX(0.9167);transform-origin:0 0;">keep-alive</div>
<div class="t" style="left:679.30px;top:358.59px;font-size:12.3px;line-height:12.3px;font-family:'Liberation Sans', sans-serif;font-weight:bold;color:#575757;transform:scaleX(0.9512);transform-origin:0 0;">Content-Encoding:</div>
<div class="t" style="left:791.50px;top:359.80px;font-size:12px;line-height:12px;font-family:'Liberation Mono', monospace;font-weight:normal;color:#2e2e2e;transform:scaleX(0.9167);transform-origin:0 0;">gzip</div>
<div class="t" style="left:679.30px;top:380.59px;font-size:12.3px;line-height:12.3px;font-family:'Liberation Sans', sans-serif;font-weight:bold;color:#575757;transform:scaleX(0.9712);transform-origin:0 0;">Content-Type:</div>
<div class="t" style="left:766.90px;top:381.80px;font-size:12px;line-height:12px;font-family:'Liberation Mono', monospace;font-weight:normal;color:#2e2e2e;transform:scaleX(0.9167);transform-origin:0 0;">text/html</div>
<div class="t" style="left:679.30px;top:402.59px;font-size:12.3px;line-height:12.3px;font-family:'Liberation Sans', sans-serif;font-weight:bold;color:#575757;transform:scaleX(0.9398);transform-origin:0 0;">Date:</div>
<div class="t" style="left:715.10px;top:403.80px;font-size:12px;line-height:12px;font-family:'Liberation Mono', monospace;font-weight:normal;color:#2e2e2e;transform:scaleX(0.9167);transform-origin:0 0;">Sat, 30 Jun 2018 13:51:09 GMT</div>
<div class="t" style="left:679.30px;top:424.59px;font-size:12.3px;line-height:12.3px;font-family:'Liberation Sans', sans-serif;font-weight:bold;color:#575757;transform:scaleX(0.9433);transform-origin:0 0;">Transfer-Encoding:</div>
<div class="t" style="left:792.60px;top:425.80px;font-size:12px;line-height:12px;font-family:'Liberation Mono', monospace;font-weight:normal;color:#2e2e2e;transform:scaleX(0.9167);transform-origin:0 0;">chunked</div>
<div style="position:absolute;left:654px;top:446px;width:854px;height:1px;background:#e0e0e0;"></div>
<svg style="position:absolute;left:660px;top:458px" width="8" height="7"><path d="M0 0.5 L7.5 0.5 L3.75 6.5 Z" fill="#6e6e6e"/></svg>
<div class="t" style="left:670.30px;top:454.59px;font-size:12.3px;line-height:12.3px;font-family:'Liberation Sans', sans-serif;font-weight:bold;color:#575757;transform:scaleX(0.9384);transform-origin:0 0;">Request Headers</div>
<div class="t" style="left:794.60px;top:454.59px;font-size:12.3px;line-height:12.3px;font-family:'Liberation Sans', sans-serif;font-weight:normal;color:#8a8a8a;transform:scaleX(0.9500);transform-origin:0 0;">view source</div>
<div class="t" style="left:679.30px;top:478.59px;font-size:12.3px;line-height:12.3px;font-family:'Liberation Sans', sans-serif;font-weight:bold;color:#575757;transform:scaleX(0.9216);transform-origin:0 0;">Accept:</div>
<div class="t" style="left:727.80px;top:479.80px;font-size:12px;line-height:12px;font-family:'Liberation Mono', monospace;font-weight:normal;color:#2e2e2e;transform:scaleX(0.9167);transform-origin:0 0;">text/html,application/xhtml+xml,application/xml;q=0.9,image/webp,image/apng,*/*;q=0.8</div>
<div class="t" style="left:679.30px;top:500.59px;font-size:12.3px;line-height:12.3px;font-family:'Liberation Sans', sans-serif;font-weight:bold;color:#575757;transform:scaleX(0.9332);transform-origin:0 0;">Accept-Encoding:</div>
<div class="t" style="left:784.40px;top:501.80px;font-size:12px;line-height:12px;font-family:'Liberation Mono', monospace;font-weight:normal;color:#2e2e2e;transform:scaleX(0.9167);transform-origin:0 0;">gzip, deflate, br</div>
<div class="t" style="left:679.30px;top:522.59px;font-size:12.3px;line-height:12.3px;font-family:'Liberation Sans', sans-serif;font-weight:bold;color:#575757;transform:scaleX(0.9449);transform-origin:0 0;">Accept-Language:</div>
<div class="t" style="left:787.60px;top:523.80px;font-size:12px;line-height:12px;font-family:'Liberation Mono', monospace;font-weight:normal;color:#2e2e2e;transform:scaleX(0.9167);transform-origin:0 0;">zh-CN,zh;q=0.9</div>
<div class="t" style="left:679.30px;top:544.59px;font-size:12.3px;line-height:12.3px;font-family:'Liberation Sans', sans-serif;font-weight:bold;color:#575757;transform:scaleX(0.9369);transform-origin:0 0;">Cache-Control:</div>
<div class="t" style="left:769.40px;top:545.80px;font-size:12px;line-height:12px;font-family:'Liberation Mono', monospace;font-weight:normal;color:#2e2e2e;transform:scaleX(0.9167);transform-origin:0 0;">max-age=0</div>
<div class="t" style="left:679.30px;top:566.59px;font-size:12.3px;line-height:12.3px;font-family:'Liberation Sans', sans-serif;font-weight:bold;color:#575757;transform:scaleX(0.9321);transform-origin:0 0;">Connection:</div>
<div class="t" style="left:753.10px;top:567.80px;font-size:12px;line-height:12px;font-family:'Liberation Mono', monospace;font-weight:normal;color:#2e2e2e;transform:scaleX(0.9167);transform-origin:0 0;">keep-alive</div>
<div class="t" style="left:679.30px;top:588.59px;font-size:12.3px;line-height:12.3px;font-family:'Liberation Sans', sans-serif;font-weight:bold;color:#575757;transform:scaleX(0.9387);transform-origin:0 0;">Host:</div>
<div class="t" style="left:715.70px;top:589.80px;font-size:12px;line-height:12px;font-family:'Liberation Mono', monospace;font-weight:normal;color:#2e2e2e;transform:scaleX(0.9167);transform-origin:0 0;">localhost:9000</div>
<div class="t" style="left:679.30px;top:610.59px;font-size:12.3px;line-height:12.3px;font-family:'Liberation Sans', sans-serif;font-weight:bold;color:#575757;transform:scaleX(0.9486);transform-origin:0 0;">Upgrade-Insecure-Requests:</div>
<div class="t" style="left:845.70px;top:611.80px;font-size:12px;line-height:12px;font-family:'Liberation Mono', monospace;font-weight:normal;color:#2e2e2e;transform:scaleX(0.9167);transform-origin:0 0;">1</div>
<div class="t" style="left:679.30px;top:632.59px;font-size:12.3px;line-height:12.3px;font-family:'Liberation Sans', sans-serif;font-weight:bold;color:#575757;transform:scaleX(0.9401);transform-origin:0 0;">User-Agent:</div>
<div class="t" style="left:752.40px;top:633.80px;font-size:12px;line-height:12px;font-family:'Liberation Mono', monospace;font-weight:normal;color:#2e2e2e;transform:scaleX(0.9167);transform-origin:0 0;">Mozilla/5.0 (Windows NT 6.1; Win64; x64) AppleWebKit/537.36 (KHTML, like Gecko) Chrome/67.0.3396.99 Safari/537.36</div>
<svg style="position:absolute;left:660px;top:365px" width="210" height="20"><path d="M9.4 8.5 L15.6 8.5 L16.5 9.4 L29 9.4 L31.9 10.3 L45.8 11 L50.4 11.9 L54.1 13.3 L200.2 13.4" stroke="#fe1200" stroke-width="3" fill="none" stroke-linecap="round" stroke-linejoin="round"/></svg>
</body></html>
